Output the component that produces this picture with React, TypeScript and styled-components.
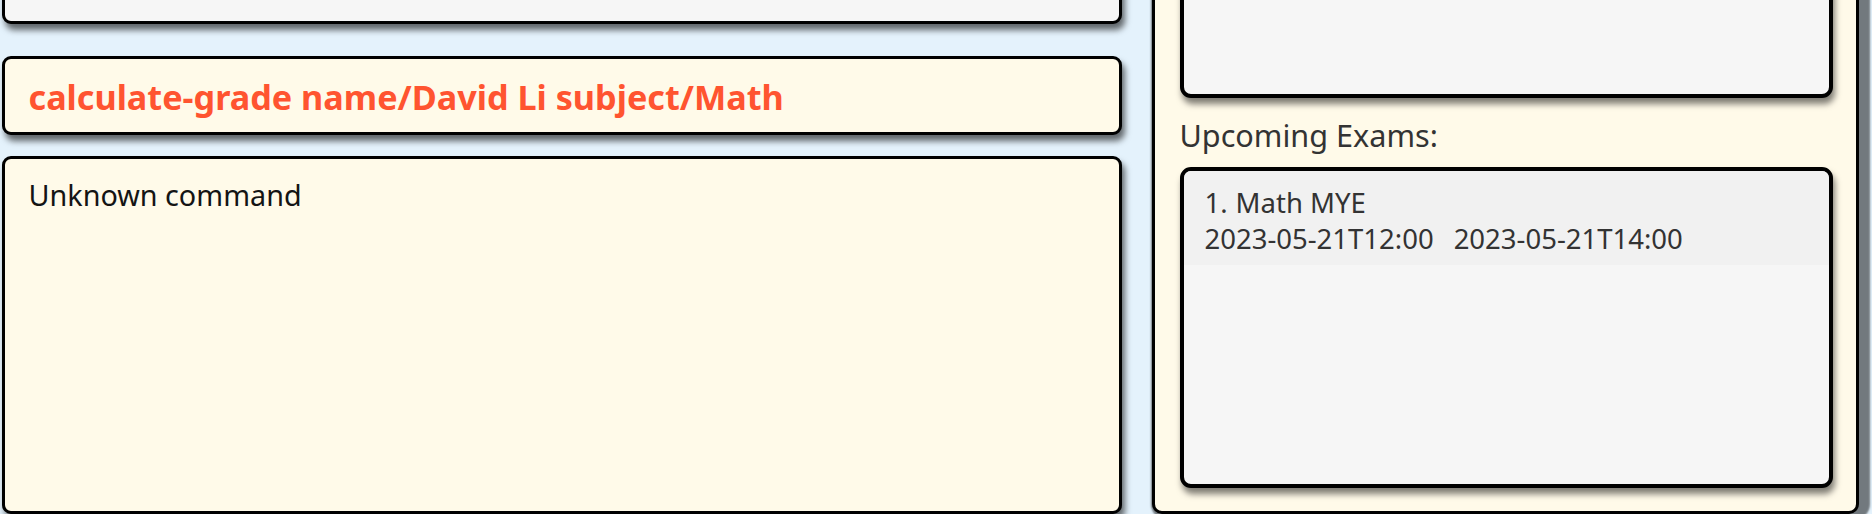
import React from "react";
import styled, { createGlobalStyle } from "styled-components";

const FONT = `"Comic Sans MS", "Noto Sans", sans-serif`;

const GlobalStyle = createGlobalStyle`
  html, body {
    margin: 0;
    padding: 0;
    width: 1872px;
    height: 514px;
    overflow: hidden;
    background: #e4f2fc;
  }
  body {
    font-family: ${FONT};
  }
`;

const Window = styled.div`
  display: flex;
  align-items: flex-start;
  gap: 30px;
  padding-left: 2px;
  margin-top: -100px;
  height: 614px;
`;

const LeftColumn = styled.div`
  width: 1120px;
  display: flex;
  flex-direction: column;
`;

const Card = styled.div<{ $bg: string }>`
  box-sizing: border-box;
  border: 3.5px solid #000;
  border-radius: 9px;
  background: ${(p) => p.$bg};
  box-shadow: 3px 6px 6px rgba(0, 0, 0, 0.58);
`;

const TopPanel = styled(Card)`
  height: 124px;
`;

const CommandBox = styled(Card)`
  margin-top: 32px;
  height: 79px;
  display: flex;
  align-items: center;
  padding: 0 23.5px;
`;

const CommandText = styled.span`
  color: #ff5430;
  font-weight: 700;
  font-size: 34.2px;
  line-height: 40px;
  white-space: nowrap;
  padding-top: 2px;
`;

const ResultBox = styled(Card)`
  margin-top: 21px;
  height: 358px;
  padding: 16px 23.5px;
`;

const ResultText = styled.div`
  color: #141414;
  font-size: 28.75px;
  line-height: 40px;
`;

const RightPanel = styled.div`
  box-sizing: border-box;
  width: 707px;
  height: 614px;
  border: 3.5px solid #000;
  border-radius: 10px;
  background: #fffae9;
  box-shadow: 5px 0 2px 6px rgba(0, 0, 0, 0.5);
  padding: 27px 23.5px 22.5px 24.5px;
  display: flex;
  flex-direction: column;
`;

const InnerBox = styled.div<{ $h: number }>`
  box-sizing: border-box;
  height: ${(p) => p.$h}px;
  border: 4px solid #000;
  border-radius: 11px;
  background: #f6f6f6;
  box-shadow: 2px 6px 6px rgba(0, 0, 0, 0.5);
  overflow: hidden;
`;

const SectionLabel = styled.div`
  box-sizing: border-box;
  height: 69px;
  padding-top: 17px;
  color: #333;
  font-size: 30.6px;
  line-height: 40px;
`;

const ExamRow = styled.div`
  background: #f1f1f1;
  padding: 14px 21px 8px;
  color: #333;
  font-size: 27.5px;
  line-height: 36px;
`;

const RowLine = styled.div<{ $gap: number }>`
  display: flex;
  gap: ${(p) => p.$gap}px;
  white-space: nowrap;
`;

export default function App() {
  return (
    <>
      <GlobalStyle />
      <Window>
        <LeftColumn>
          <TopPanel $bg="#f6f6f6" />
          <CommandBox $bg="#fffae9">
            <CommandText>calculate-grade name/David Li subject/Math</CommandText>
          </CommandBox>
          <ResultBox $bg="#fffae9">
            <ResultText>Unknown command</ResultText>
          </ResultBox>
        </LeftColumn>
        <RightPanel>
          <InnerBox $h={168} />
          <SectionLabel>Upcoming Exams:</SectionLabel>
          <InnerBox $h={321}>
            <ExamRow>
              <RowLine $gap={8}>
                <span>1.</span>
                <span>Math MYE</span>
              </RowLine>
              <RowLine $gap={20}>
                <span>2023-05-21T12:00</span>
                <span>2023-05-21T14:00</span>
              </RowLine>
            </ExamRow>
          </InnerBox>
        </RightPanel>
      </Window>
    </>
  );
}
